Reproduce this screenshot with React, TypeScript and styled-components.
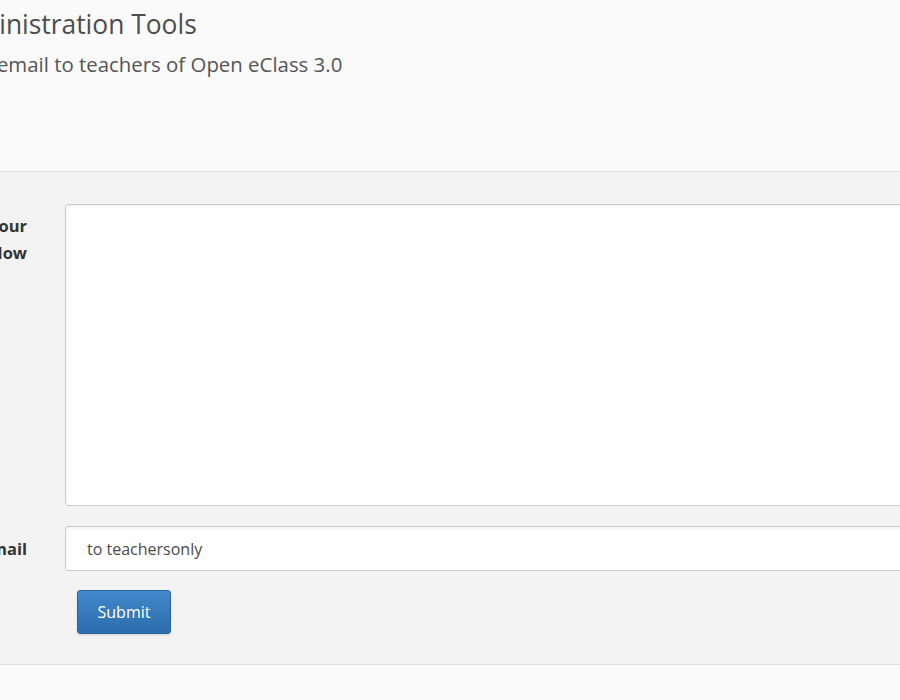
import React from "react";
import styled, { createGlobalStyle } from "styled-components";

const GlobalStyle = createGlobalStyle`
  html, body {
    margin: 0;
    padding: 0;
    background: #fafafa;
    overflow: hidden;
  }
  body {
    font-family: "Open Sans", "Liberation Sans", sans-serif;
    color: #333;
  }
`;

const Page = styled.div`
  width: 1300px;
  margin-left: -173px;
`;

const Header = styled.header`
  height: 171px;
  box-sizing: border-box;
  padding: 6px 0 0 115px;
`;

const Title = styled.h1`
  margin: 0;
  font-size: 26.4px;
  font-weight: 400;
  line-height: 36px;
  color: #4d4d4d;
`;

const Subtitle = styled.p`
  margin: 9px 0 0 2px;
  font-size: 20.4px;
  line-height: 26px;
  color: #555;
`;

const Panel = styled.section`
  background: #f3f3f3;
  border-top: 1px solid #dedede;
  border-bottom: 1px solid #dedede;
  padding: 32px 0 30px;
`;

const Form = styled.form`
  display: grid;
  grid-template-columns: 200px 1fr;
  column-gap: 38px;
  row-gap: 20px;
`;

const Label = styled.label<{ $top?: number }>`
  text-align: right;
  white-space: nowrap;
  font-size: 16.5px;
  font-weight: 700;
  line-height: 27px;
  color: #333;
  padding-top: ${(p) => p.$top ?? 0}px;
`;

const TextArea = styled.textarea`
  display: block;
  box-sizing: border-box;
  width: 100%;
  height: 302px;
  border: 1px solid #ccc;
  border-radius: 3px;
  background: #fff;
  box-shadow: inset 0 2px 3px rgba(0, 0, 0, 0.06);
  resize: none;
  outline: none;
`;

const Input = styled.input`
  display: block;
  box-sizing: border-box;
  width: 100%;
  height: 45px;
  border: 1px solid #ccc;
  border-radius: 3px;
  background: #fff;
  box-shadow: inset 0 2px 3px rgba(0, 0, 0, 0.05);
  padding: 0 0 0 21px;
  font-family: "Open Sans", "Liberation Sans", sans-serif;
  font-size: 16px;
  color: #4a4a4a;
  outline: none;
`;

const Actions = styled.div`
  grid-column: 2;
  padding-left: 12px;
  margin-top: -1px;
`;

const Button = styled.button`
  width: 94px;
  height: 44px;
  border: 1px solid #2a67a0;
  border-radius: 3px;
  background: linear-gradient(#4289cb, #2b6cab);
  box-shadow: 0 1px 2px rgba(0, 0, 0, 0.15);
  color: #fff;
  font-family: "Open Sans", "Liberation Sans", sans-serif;
  font-size: 16px;
  cursor: pointer;
`;

const Footer = styled.div`
  height: 40px;
  background: #fafafa;
`;

export default function App() {
  return (
    <>
      <GlobalStyle />
      <Page>
        <Header>
          <Title>Administration Tools</Title>
          <Subtitle>Send email to teachers of Open eClass 3.0</Subtitle>
        </Header>
        <Panel>
          <Form onSubmit={(e) => e.preventDefault()}>
            <Label $top={8}>
              Type your
              <br />
              message below
            </Label>
            <TextArea />
            <Label $top={9}>Send email</Label>
            <Input defaultValue="to teachersonly" readOnly />
            <Actions>
              <Button type="submit">Submit</Button>
            </Actions>
          </Form>
        </Panel>
        <Footer />
      </Page>
    </>
  );
}
